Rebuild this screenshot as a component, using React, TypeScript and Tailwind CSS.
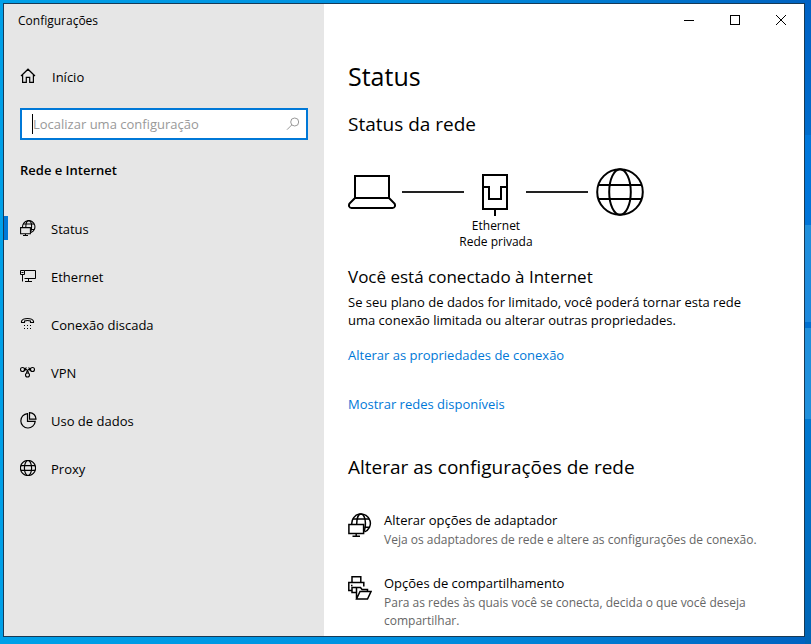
import type { ReactNode } from 'react';

interface IconProps {
  className?: string;
  stroke?: number;
}

function HomeIcon() {
  return (
    <svg width="16" height="16" viewBox="0 0 16 16" fill="none" stroke="currentColor" strokeWidth="1.2" aria-hidden="true">
      <path d="M1 8 8 1.2 15 8M2.6 6.6V14.4H6.3V9.4H9.7V14.4H13.4V6.6" />
    </svg>
  );
}

function SearchIcon() {
  return (
    <svg width="14" height="14" viewBox="0 0 14 14" fill="none" stroke="currentColor" strokeWidth="1" aria-hidden="true">
      <circle cx="8.7" cy="5" r="4" />
      <path d="M5.8 7.9 1 12.7" />
    </svg>
  );
}

function GlobeMonitorIcon({ className, stroke = 1.5 }: IconProps) {
  return (
    <svg className={className} viewBox="0 0 24 24" fill="none" stroke="currentColor" strokeWidth={stroke} aria-hidden="true">
      <path d="M3.8 11A9.3 9.3 0 1 1 16.5 18.9" />
      <path d="M8.7 11C8.7 5 10.5.9 13 .9S17.4 5 17.4 10C17.4 13.5 17 16.5 15.8 18.5" />
      <path d="M4.7 6H21.4M16.5 14.2H21.4" />
      <path d="M.9 11.4H15.6V20.6H.9ZM8.2 20.6V23.2M4.5 23.2H12" />
    </svg>
  );
}

function EthernetIcon() {
  return (
    <svg width="17" height="14" viewBox="0 0 17 14" fill="none" stroke="currentColor" strokeWidth="1" aria-hidden="true">
      <path d="M.5 1.5H4.5V5.5H.5ZM1.5 3.5H3.5M2.5 5.5V12.5M4.5 1.5H15.5V9.5H4.5M8.5 9.5V12.5M5 12.5H12" />
    </svg>
  );
}

function DialupIcon() {
  return (
    <svg width="16" height="14" viewBox="0 0 16 14" fill="none" stroke="currentColor" strokeWidth="1.1" aria-hidden="true">
      <path d="M1.5 5.5V4.2C3 .5 12 .5 13.500 4.200V5.500H10.500V4C8.500 3.300 6.500 3.300 4.500 4V5.500Z" />
      <path d="M4 8.500H5M7 8.500H8M10 8.500H11M4 11.500H5M7 11.500H8M10 11.500H11" />
    </svg>
  );
}

function VpnIcon() {
  return (
    <svg width="16" height="12" viewBox="0 0 16 12" fill="none" stroke="currentColor" strokeWidth="1.1" aria-hidden="true">
      <circle cx="2.5" cy="3.5" r="2" />
      <circle cx="12.5" cy="3.5" r="2" />
      <circle cx="7.5" cy="9" r="2" />
      <path d="M4 4.800C6.500 4.800 5 1.500 6.500 1.500M4 2.300C5.500 2.500 8.500 4.500 8.500 7.200M11 4.800C8.500 4.800 10 1.500 8.500 1.500M11 2.300C9.500 2.500 6.500 4.500 6.500 7.200" />
    </svg>
  );
}

function DataIcon() {
  return (
    <svg width="17" height="17" viewBox="0 0 17 17" fill="none" stroke="currentColor" strokeWidth="1.2" aria-hidden="true">
      <path d="M7.5 1.6A7.2 7.2 0 1 0 15.2 9.4H7.5Z" />
      <path d="M9.5.6V7.2H16A6.5 6.5 0 0 0 9.5.6Z" />
    </svg>
  );
}

function GlobeIcon({ className, stroke = 2 }: IconProps) {
  return (
    <svg className={className} viewBox="0 0 48 48" fill="none" stroke="currentColor" strokeWidth={stroke} aria-hidden="true">
      <circle cx="24" cy="24" r="22.8" />
      <ellipse cx="24" cy="24" rx="10.8" ry="22.8" />
      <path d="M2.5 17H45.5M2.5 31H45.5" />
    </svg>
  );
}

function LaptopIcon() {
  return (
    <svg width="48" height="36" viewBox="0 0 48 36" fill="none" stroke="currentColor" strokeWidth="2" aria-hidden="true">
      <path d="M7 24V2H41V24ZM7 24 1.5 29.5C.5 31.5 1 34 3.5 34H44.5C47 34 47.5 31.5 46.5 29.5L41 24" />
    </svg>
  );
}

function JackIcon() {
  return (
    <svg width="26" height="42" viewBox="0 0 26 42" fill="none" stroke="currentColor" strokeWidth="2" aria-hidden="true">
      <path d="M1 1H25V35H1ZM1 13H7V25H19V13H25M13 35V42" />
    </svg>
  );
}

function SharingIcon() {
  return (
    <svg width="24" height="24" viewBox="0 0 24 24" fill="none" stroke="currentColor" strokeWidth="1.5" aria-hidden="true">
      <path d="M4 6.5V.8H12.8V6.5M4 14.5H.8V6.5H15.8V10.5M3 9.5H4.5M8 11.5H4V16.5H8" />
      <path d="M8.5 23V11.5H12.5L14 13.5H19.5V15.5M8.5 23 12 15.5H23L19.5 23Z" />
    </svg>
  );
}

const navItems: { label: string; icon: ReactNode; active?: boolean }[] = [
  { label: 'Status', icon: <GlobeMonitorIcon className="size-4" stroke={1.6} />, active: true },
  { label: 'Ethernet', icon: <EthernetIcon /> },
  { label: 'Conexão discada', icon: <DialupIcon /> },
  { label: 'VPN', icon: <VpnIcon /> },
  { label: 'Uso de dados', icon: <DataIcon /> },
  { label: 'Proxy', icon: <GlobeIcon className="size-4" stroke={3.5} /> },
];

const settings: { title: string; text: string; icon: ReactNode }[] = [
  {
    title: 'Alterar opções de adaptador',
    text: 'Veja os adaptadores de rede e altere as configurações de conexão.',
    icon: <GlobeMonitorIcon className="size-6" />,
  },
  {
    title: 'Opções de compartilhamento',
    text: 'Para as redes às quais você se conecta, decida o que você deseja compartilhar.',
    icon: <SharingIcon />,
  },
];

function Sidebar() {
  return (
    <aside className="w-80 shrink-0 bg-[#e6e6e6] text-[13px]">
      <div className="px-3.5 pt-[7px] text-[12px] leading-5">Configurações</div>
      <a href="#inicio" className="mt-[25px] flex h-10 items-center gap-4 pl-4">
        <HomeIcon />
        <span className="pt-[3px]">Início</span>
      </a>
      <div className="mx-4 mt-3 flex h-8 items-center border-2 border-[#0078d7] bg-white pr-1.5 pl-2.5">
        <span className="h-5 w-px bg-black" />
        <input
          type="text"
          aria-label="Localizar uma configuração"
          placeholder="Localizar uma configuração"
          className="h-5 min-w-0 flex-1 bg-transparent outline-none placeholder:text-[#999]"
        />
        <button aria-label="Pesquisar" className="text-[#999]">
          <SearchIcon />
        </button>
      </div>
      <h2 className="mt-5 px-4 leading-5 font-semibold">Rede e Internet</h2>
      <nav className="mt-6">
        {navItems.map(item => (
          <a key={item.label} href={`#${item.label}`} className="flex h-12 items-center">
            <span className={`h-6 w-1 ${item.active ? 'bg-[#0078d7]' : ''}`} />
            <span className="ml-3 flex w-[31px]">{item.icon}</span>
            <span className="pt-[3px]">{item.label}</span>
          </a>
        ))}
      </nav>
    </aside>
  );
}

function WindowControls() {
  return (
    <div className="flex justify-end">
      <button aria-label="Minimizar" className="flex h-8 w-[46px] items-center justify-center">
        <span className="h-px w-2.5 bg-black" />
      </button>
      <button aria-label="Maximizar" className="flex h-8 w-[46px] items-center justify-center">
        <span className="size-2.5 border border-black" />
      </button>
      <button aria-label="Fechar" className="flex h-8 w-[46px] items-center justify-center">
        <svg width="10" height="10" viewBox="0 0 10 10" stroke="currentColor" aria-hidden="true">
          <path d="M0 0 10 10M10 0 0 10" />
        </svg>
      </button>
    </div>
  );
}

function NetworkDiagram() {
  return (
    <div className="mt-[30px] w-[296px]">
      <div className="flex h-12 items-center">
        <LaptopIcon />
        <span className="ml-1.5 h-0.5 flex-1 bg-[#222]" />
        <span className="flex h-full w-[62px] items-end justify-center"><JackIcon /></span>
        <span className="mr-2 h-0.5 flex-1 bg-[#222]" />
        <GlobeIcon className="size-12" />
      </div>
      <p className="pt-0.5 text-center text-[12px] leading-4">
        Ethernet
        <br />
        Rede privada
      </p>
    </div>
  );
}

export default function App() {
  return (
    <div className="flex min-h-screen bg-[linear-gradient(#0062c4,#006ccc_21%,#0078dc_21%,#0074d8_35%,#2090dc_35%,#1c88dc_50%,#0070d0_50%,#0070d0_51%,#2090dc_51%,#2090dc_65%,#0078d0_65%,#0064b4),linear-gradient(to_right,#00a0e8,#0090e0_50%,#0062c0)] bg-[length:6px_100%,100%_100%] bg-right bg-no-repeat pt-[3px] pr-1.5 pb-[7px] pl-[3px] font-['Open_Sans','Noto_Sans',sans-serif] text-black">
      <div className="flex min-w-0 flex-1 border border-[#173a56] bg-white">
        <Sidebar />
        <main className="min-w-0 flex-1">
          <WindowControls />
          <div className="px-6 pb-1">
            <h1 className="mt-5 text-[25px] leading-10">Status</h1>
            <h2 className="mt-3.5 text-[19px] leading-7">Status da rede</h2>
            <NetworkDiagram />
            <h3 className="mt-[15px] text-[17px] leading-6">Você está conectado à Internet</h3>
            <p className="mt-1 pr-8 text-[13px] leading-[18px]">
              Se seu plano de dados for limitado, você poderá tornar esta rede uma conexão limitada ou alterar outras propriedades.
            </p>
            <div className="mt-4 flex flex-col items-start gap-[29px] text-[13px] leading-5 text-[#0078d7]">
              <a href="#propriedades">Alterar as propriedades de conexão</a>
              <a href="#redes">Mostrar redes disponíveis</a>
            </div>
            <h2 className="mt-[39px] text-[19px] leading-7">Alterar as configurações de rede</h2>
            <div className="mt-[29px] flex flex-col gap-6">
              {settings.map(s => (
                <a key={s.title} href={`#${s.title}`} className="flex gap-3">
                  <span className="flex w-6 shrink-0 items-start pt-[3px]">{s.icon}</span>
                  <span>
                    <span className="block text-[13px] leading-[21px]">{s.title}</span>
                    <span className="block text-[12px] leading-[18px] text-[#666]">{s.text}</span>
                  </span>
                </a>
              ))}
            </div>
          </div>
        </main>
      </div>
    </div>
  );
}
